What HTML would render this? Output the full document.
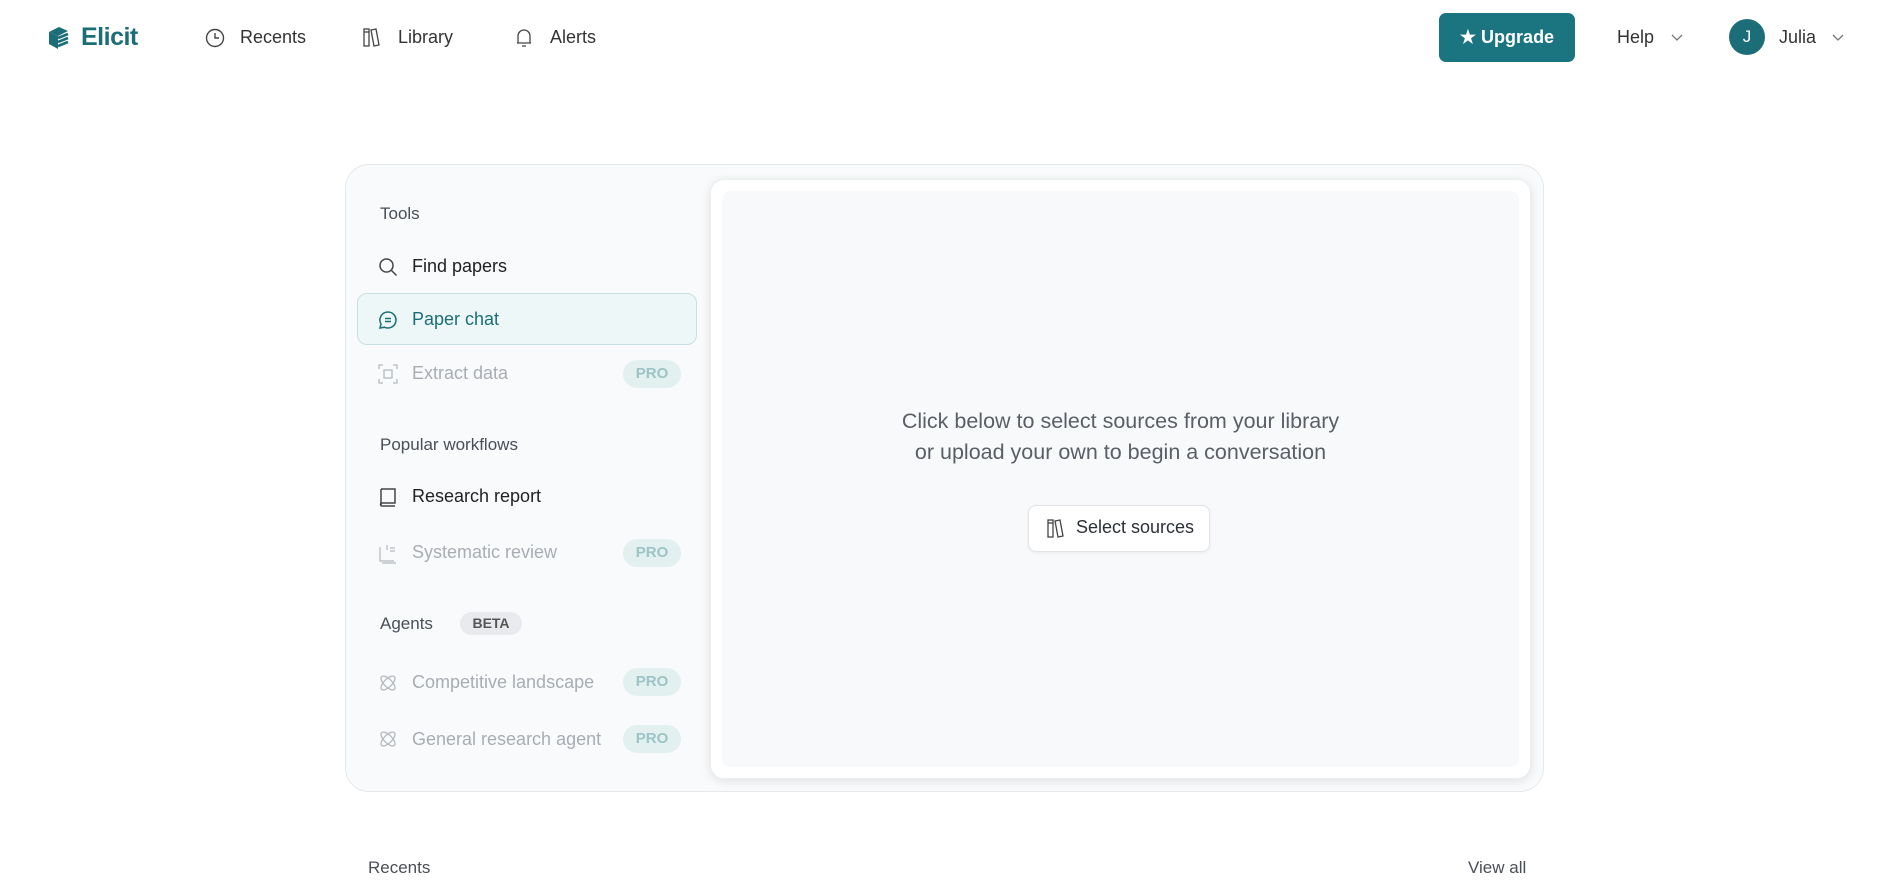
<!DOCTYPE html>
<html><head><meta charset="utf-8"><style>
*{box-sizing:border-box;margin:0;padding:0}
body{width:1893px;height:885px;background:#fff;font-family:"Liberation Sans",sans-serif;position:relative;overflow:hidden;color:#2b2f36}
.a{position:absolute;white-space:nowrap}
.nav{font-size:18px;color:#333;top:27px}
svg{position:absolute}
.item{font-size:18px;color:#222;left:412px}
.dim{color:#a9adb3}
.hdr{font-size:17px;color:#4a4f57;left:380px}
.pro{position:absolute;left:623px;width:58px;height:28px;border-radius:14px;background:#e3f0f0;color:#9cc4c6;font-weight:bold;font-size:15px;text-align:center;line-height:28px}
</style></head><body>
<!-- header -->
<svg style="left:46px;top:25px" width="26" height="26" viewBox="0 0 26 26"><path d="M3 7 L13 2 L22 6 L12 11 Z" fill="#1b6e78"/><path d="M3 7 L12 11 L12 24 L3 19 Z" fill="#1b6e78"/><path d="M12 13 L22 9 M12 17 L22 13 M12 21 L22 17" stroke="#1b6e78" stroke-width="2.6"/></svg>
<div class="a" style="left:81px;top:23px;font-size:25px;color:#1b6e78;font-weight:bold;letter-spacing:-0.5px">Elicit</div>
<svg style="left:205px;top:28px" width="20" height="20" viewBox="0 0 20 20" fill="none" stroke="#444" stroke-width="1.4"><circle cx="10" cy="10" r="8.5"/><path d="M10 5v5h4"/></svg>
<div class="a nav" style="left:240px">Recents</div>
<svg style="left:362px;top:27px" width="22" height="22" viewBox="0 0 22 22" fill="none" stroke="#444" stroke-width="1.3"><rect x="2" y="2" width="5" height="17"/><path d="M9 3l5-1 3 16-5 1z"/><path d="M2 5h5"/></svg>
<div class="a nav" style="left:398px">Library</div>
<svg style="left:514px;top:27px" width="20" height="22" viewBox="0 0 20 22" fill="none" stroke="#444" stroke-width="1.3"><path d="M4 16V9a6 6 0 0 1 12 0v7H3h14M8 19h4"/></svg>
<div class="a nav" style="left:550px">Alerts</div>
<div class="a" style="left:1439px;top:13px;width:136px;height:49px;background:#1b7580;border-radius:7px;color:#fff;font-weight:bold;font-size:18px;line-height:49px;text-align:center">★ Upgrade</div>
<div class="a nav" style="left:1617px">Help</div>
<svg style="left:1670px;top:33px" width="14" height="10" viewBox="0 0 14 10" fill="none" stroke="#777" stroke-width="1.3"><path d="M2 2l5 5 5-5"/></svg>
<div class="a" style="left:1729px;top:19px;width:36px;height:36px;border-radius:50%;background:#1b6e78;color:#fff;text-align:center;line-height:36px;font-size:17px">J</div>
<div class="a nav" style="left:1779px">Julia</div>
<svg style="left:1831px;top:33px" width="14" height="10" viewBox="0 0 14 10" fill="none" stroke="#777" stroke-width="1.3"><path d="M2 2l5 5 5-5"/></svg>
<!-- panel -->
<div class="a" style="left:345px;top:164px;width:1199px;height:628px;background:#f8fafb;border:1px solid #e6e9ec;border-radius:24px"></div>
<div class="a" style="left:710px;top:179px;width:821px;height:600px;background:#fff;border:1px solid #eceef0;border-radius:14px;box-shadow:0 2px 10px rgba(0,0,0,0.1)"></div>
<div class="a" style="left:722px;top:191px;width:797px;height:576px;background:#f8f9fa;border-radius:8px"></div>
<!-- sidebar -->
<div class="a hdr" style="top:204px">Tools</div>
<svg style="left:378px;top:257px" width="20" height="20" viewBox="0 0 20 20" fill="none" stroke="#444" stroke-width="1.5"><circle cx="8.5" cy="8.5" r="6.5"/><path d="M13.5 13.5l5 5"/></svg>
<div class="a item" style="top:256px">Find papers</div>
<div class="a" style="left:357px;top:293px;width:340px;height:52px;background:#eef7f7;border:1px solid #c7e0e1;border-radius:10px"></div>
<svg style="left:378px;top:310px" width="20" height="20" viewBox="0 0 20 20" fill="none" stroke="#1b6e78" stroke-width="1.5"><path d="M10 2a8 8 0 1 1-3.5 15.2L2 18l1-4A8 8 0 0 1 10 2z"/><path d="M7 8.5h6M7 11.5h6"/></svg>
<div class="a item" style="top:309px;color:#1b6e78">Paper chat</div>
<svg style="left:378px;top:364px" width="20" height="20" viewBox="0 0 20 20" fill="none" stroke="#b5b9be" stroke-width="1.3"><path d="M1 5V1h4M15 1h4v4M19 15v4h-4M5 19H1v-4"/><rect x="6" y="6" width="8" height="8"/></svg>
<div class="a item dim" style="top:363px">Extract data</div>
<div class="pro" style="top:360px">PRO</div>
<div class="a hdr" style="top:435px">Popular workflows</div>
<svg style="left:378px;top:487px" width="20" height="20" viewBox="0 0 20 20" fill="none" stroke="#444" stroke-width="1.5"><path d="M3 2h14v14H4a1.5 1.5 0 0 0 0 3h13"/><path d="M3 2v16"/></svg>
<div class="a item" style="top:486px">Research report</div>
<svg style="left:378px;top:542px" width="20" height="22" viewBox="0 0 20 22" fill="none" stroke="#b5b9be" stroke-width="1.2"><path d="M2 5v14h14M4 21h14"/><path d="M9 3v5M12 6h5M12 9h5"/></svg>
<div class="a item dim" style="top:542px">Systematic review</div>
<div class="pro" style="top:539px">PRO</div>
<div class="a hdr" style="top:614px">Agents</div>
<div class="a" style="left:460px;top:612px;width:62px;height:23px;border-radius:12px;background:#e8eaed;color:#555;font-weight:bold;font-size:14px;text-align:center;line-height:23px">BETA</div>
<svg style="left:378px;top:673px" width="20" height="20" viewBox="0 0 20 20" fill="none" stroke="#b5b9be" stroke-width="1.3"><ellipse cx="10" cy="10" rx="9" ry="4" transform="rotate(45 10 10)"/><ellipse cx="10" cy="10" rx="9" ry="4" transform="rotate(-45 10 10)"/></svg>
<div class="a item dim" style="top:672px">Competitive landscape</div>
<div class="pro" style="top:668px">PRO</div>
<svg style="left:378px;top:729px" width="20" height="20" viewBox="0 0 20 20" fill="none" stroke="#b5b9be" stroke-width="1.3"><ellipse cx="10" cy="10" rx="9" ry="4" transform="rotate(45 10 10)"/><ellipse cx="10" cy="10" rx="9" ry="4" transform="rotate(-45 10 10)"/></svg>
<div class="a item dim" style="top:729px">General research agent</div>
<div class="pro" style="top:725px">PRO</div>
<!-- center -->
<div class="a" style="left:722px;width:797px;top:406px;text-align:center;font-size:21.5px;line-height:31px;color:#5a5f66">Click below to select sources from your library<br>or upload your own to begin a conversation</div>
<div class="a" style="left:1028px;top:505px;width:182px;height:47px;background:#fff;border:1px solid #e2e5e8;border-radius:8px;box-shadow:0 1px 3px rgba(0,0,0,0.06)"></div>
<svg style="left:1046px;top:518px" width="22" height="22" viewBox="0 0 22 22" fill="none" stroke="#444" stroke-width="1.3"><rect x="2" y="2" width="5" height="17"/><path d="M9 3l5-1 3 16-5 1z"/><path d="M2 5h5"/></svg>
<div class="a" style="left:1076px;top:517px;font-size:18px;color:#2b2f36">Select sources</div>
<!-- bottom -->
<div class="a" style="left:368px;top:858px;font-size:17px;color:#4a4f57">Recents</div>
<div class="a" style="left:1468px;top:858px;font-size:17px;color:#4a4f57">View all</div>
</body></html>
